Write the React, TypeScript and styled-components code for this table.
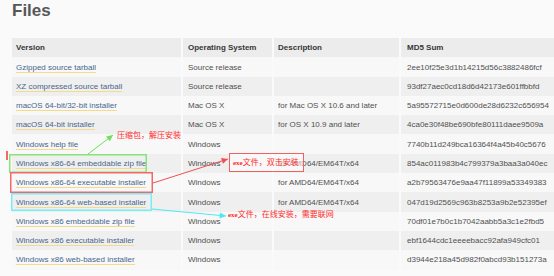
import React from 'react';
import styled, { createGlobalStyle } from 'styled-components';

const GlobalStyle = createGlobalStyle`
  html, body {
    margin: 0;
    padding: 0;
    background: #fafafa;
    overflow: hidden;
  }
  body {
    font-family: 'Liberation Sans', Arial, sans-serif;
  }
`;

interface FileRow {
  name: string;
  os: string;
  description: string;
  md5: string;
}

const rows: FileRow[] = [
  { name: 'Gzipped source tarball', os: 'Source release', description: '', md5: '2ee10f25e3d1b14215d56c3882486fcf' },
  { name: 'XZ compressed source tarball', os: 'Source release', description: '', md5: '93df27aec0cd18d6d42173e601ffbbfd' },
  { name: 'macOS 64-bit/32-bit installer', os: 'Mac OS X', description: 'for Mac OS X 10.6 and later', md5: '5a95572715e0d600de28d6232c656954' },
  { name: 'macOS 64-bit installer', os: 'Mac OS X', description: 'for OS X 10.9 and later', md5: '4ca0e30f48be690bfe80111daee9509a' },
  { name: 'Windows help file', os: 'Windows', description: '', md5: '7740b11d249bca16364f4a45b40c5676' },
  { name: 'Windows x86-64 embeddable zip file', os: 'Windows', description: 'for AMD64/EM64T/x64', md5: '854ac011983b4c799379a3baa3a040ec' },
  { name: 'Windows x86-64 executable installer', os: 'Windows', description: 'for AMD64/EM64T/x64', md5: 'a2b79563476e9aa47f11899a53349383' },
  { name: 'Windows x86-64 web-based installer', os: 'Windows', description: 'for AMD64/EM64T/x64', md5: '047d19d2569c963b8253a9b2e52395ef' },
  { name: 'Windows x86 embeddable zip file', os: 'Windows', description: '', md5: '70df01e7b0c1b7042aabb5a3c1e2fbd5' },
  { name: 'Windows x86 executable installer', os: 'Windows', description: '', md5: 'ebf1644cdc1eeeebacc92afa949cfc01' },
  { name: 'Windows x86 web-based installer', os: 'Windows', description: '', md5: 'd3944e218a45d982f0abcd93b151273a' },
];

const Page = styled.div`
  position: relative;
  width: 554px;
  height: 276px;
  padding-left: 12px;
  box-sizing: border-box;
  overflow: hidden;
`;

const Title = styled.h1`
  margin: 0;
  height: 38px;
  font-size: 17px;
  line-height: 21px;
  font-weight: 700;
  color: #575757;
`;

const Table = styled.table`
  width: 550px;
  border-collapse: collapse;
  table-layout: fixed;
  font-size: 8px;
  color: #505050;
`;

const HeadRow = styled.tr`
  height: 19.3px;
  background: #ececec;
  border-bottom: 1px solid #f6f6f6;
`;

const Row = styled.tr<{ $shade: boolean }>`
  height: 19.3px;
  background: ${({ $shade }) => ($shade ? '#efefef' : '#f8f8f8')};
`;

const Th = styled.th<{ $w?: number; $pad?: number }>`
  box-sizing: border-box;
  ${({ $w }) => ($w ? `width: ${$w}px;` : '')}
  padding: 0 0 0 ${({ $pad }) => $pad ?? 4}px;
  text-align: left;
  font-weight: 700;
  color: #363636;
  border-right: 2px solid #fafafa;
  white-space: nowrap;
`;

const Td = styled.td<{ $pad?: number }>`
  padding: 0 0 0 ${({ $pad }) => $pad ?? 4}px;
  border-right: 2px solid #fafafa;
  white-space: nowrap;
  overflow: hidden;
`;

const FileLink = styled.a`
  color: #47668d;
  text-decoration: none;
  border-bottom: 1px solid #f7d98c;
`;

const Note = styled.div<{ $x: number; $y: number; $boxed?: boolean }>`
  position: absolute;
  left: ${({ $x }) => $x}px;
  top: ${({ $y }) => $y}px;
  font-family: 'Noto Sans CJK SC', sans-serif;
  font-size: 8px;
  line-height: 10px;
  color: #ff2a2a;
  white-space: nowrap;
  ${({ $boxed }) =>
    $boxed &&
    `
    background: rgba(255, 255, 255, 0.55);
    border: 1px solid #f26060;
    padding: 3px 4px 3px 3px;
  `}
`;

const Latin = styled.span`
  font-family: 'Liberation Serif', serif;
  font-weight: 700;
  font-size: 7px;
`;

const Overlay = styled.svg`
  position: absolute;
  left: 0;
  top: 0;
  pointer-events: none;
`;

const Arrow = ({ x1, y1, x2, y2, color }: { x1: number; y1: number; x2: number; y2: number; color: string }) => {
  const a = Math.atan2(y2 - y1, x2 - x1);
  const len = 7;
  const spread = 0.45;
  const p1 = [x2 - len * Math.cos(a - spread), y2 - len * Math.sin(a - spread)];
  const p2 = [x2 - len * Math.cos(a + spread), y2 - len * Math.sin(a + spread)];
  return (
    <g>
      <line x1={x1} y1={y1} x2={x2} y2={y2} stroke={color} strokeWidth={1} />
      <polygon points={`${x2},${y2} ${p1[0]},${p1[1]} ${p2[0]},${p2[1]}`} fill={color} />
    </g>
  );
};

export default function App() {
  return (
    <>
      <GlobalStyle />
      <Page>
        <Title>Files</Title>
        <Table>
          <thead>
            <HeadRow>
              <Th $w={170}>Version</Th>
              <Th $w={91} $pad={5}>Operating System</Th>
              <Th $w={127}>Description</Th>
              <Th $pad={6}>MD5 Sum</Th>
            </HeadRow>
          </thead>
          <tbody>
            {rows.map((r, i) => (
              <Row key={r.name} $shade={i % 2 === 1}>
                <Td>
                  <FileLink href="#">{r.name}</FileLink>
                </Td>
                <Td $pad={5}>{r.os}</Td>
                <Td>{r.description}</Td>
                <Td $pad={6}>{r.md5}</Td>
              </Row>
            ))}
          </tbody>
        </Table>

        <Overlay width={554} height={276}>
          <rect x={6} y={151} width={2} height={9} fill="#f46a6a" />
          <rect x={9.75} y={154.75} width={136.5} height={17.5} fill="none" stroke="#86e47a" strokeWidth={1.5} />
          <rect x={10.75} y={172.75} width={141.5} height={19.5} fill="none" stroke="#f26868" strokeWidth={1.5} />
          <rect x={11.75} y={193.75} width={139.5} height={16.5} fill="none" stroke="#76eef6" strokeWidth={1.5} />
          <Arrow x1={88} y1={154} x2={113} y2={135} color="#6ee05c" />
          <Arrow x1={153} y1={183} x2={228} y2={159} color="#f05050" />
          <Arrow x1={152} y1={209} x2={226} y2={216} color="#4ee8f4" />
        </Overlay>

        <Note $x={117} $y={130}>压缩包，解压安装</Note>
        <Note $x={229} $y={153} $boxed>
          <Latin>exe</Latin>文件，双击安装
        </Note>
        <Note $x={228} $y={209}>
          <Latin>exe</Latin>文件，在线安装，需要联网
        </Note>
      </Page>
    </>
  );
}
